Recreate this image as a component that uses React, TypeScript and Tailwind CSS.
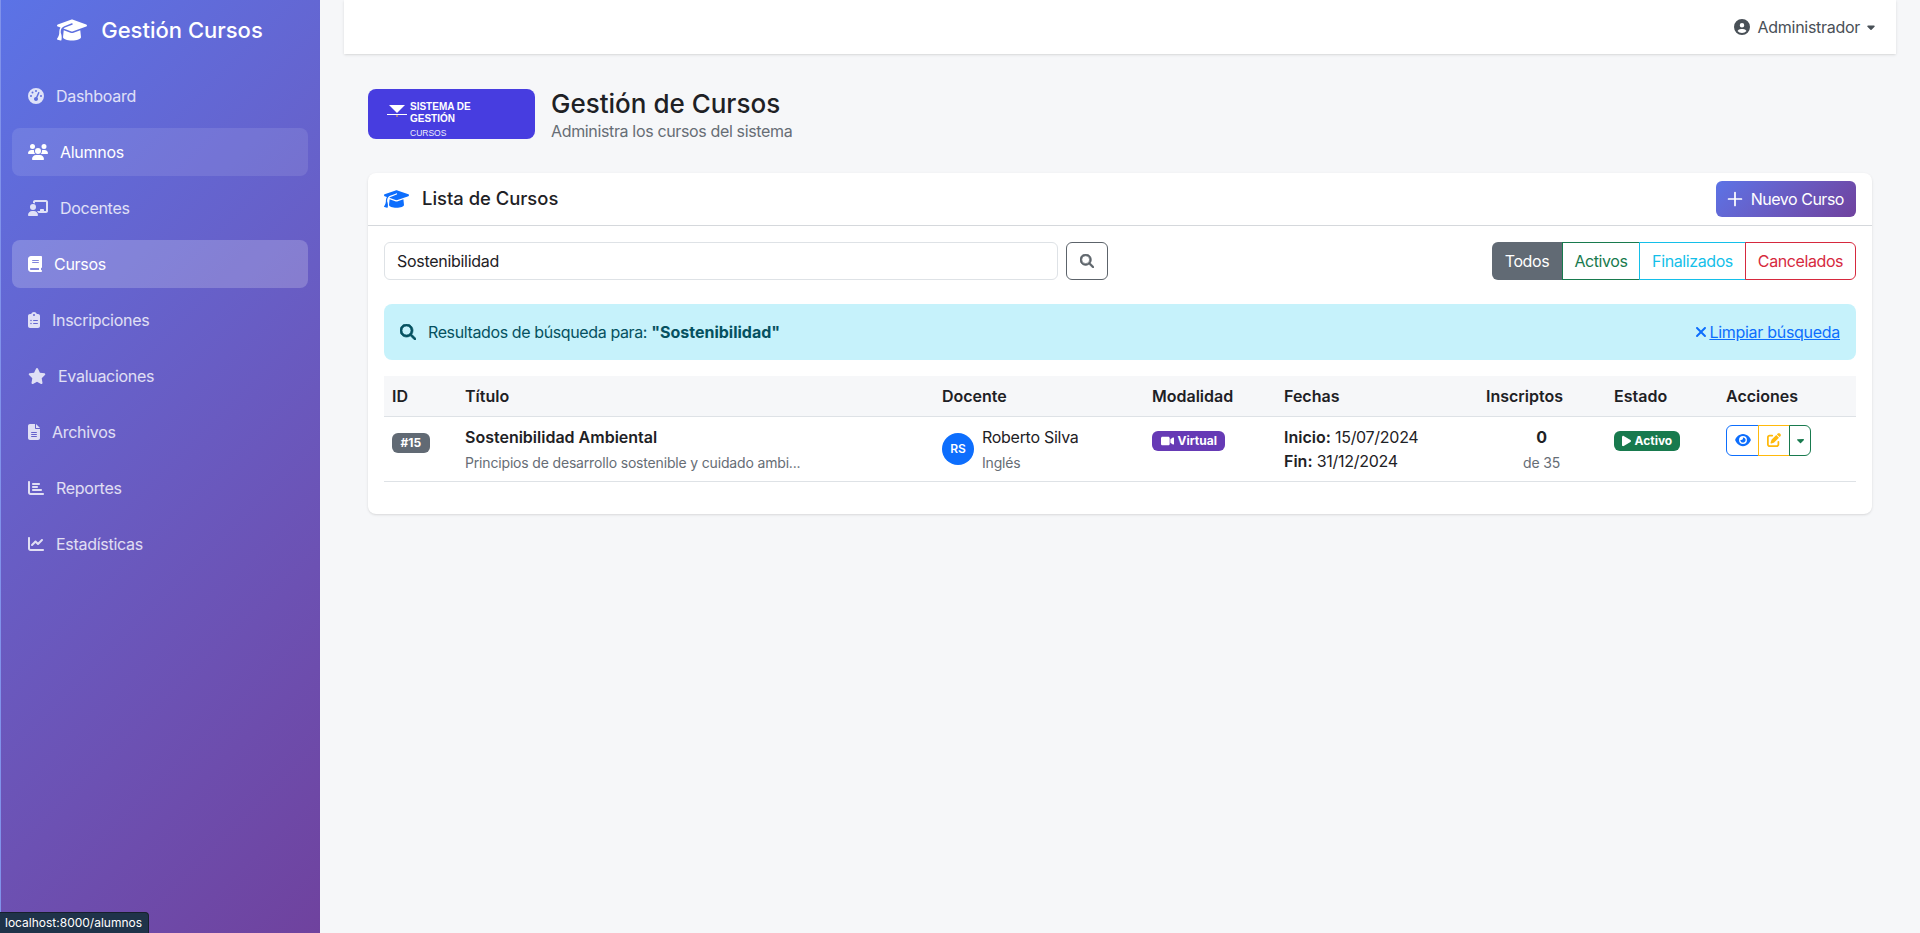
import type { ReactNode } from "react";
import {
  FaBook,
  FaCaretDown,
  FaChalkboardUser,
  FaChartBar,
  FaChartLine,
  FaCircleUser,
  FaClipboardList,
  FaEye,
  FaFileLines,
  FaGaugeHigh,
  FaGraduationCap,
  FaMagnifyingGlass,
  FaPenToSquare,
  FaPlay,
  FaStar,
  FaUsers,
  FaVideo,
  FaXmark,
} from "react-icons/fa6";
import { Plus } from "lucide-react";

type NavItem = { label: string; icon: ReactNode; state?: "hover" | "active" };

const NAV_ITEMS: NavItem[] = [
  { label: "Dashboard", icon: <FaGaugeHigh className="h-4 w-4" /> },
  { label: "Alumnos", icon: <FaUsers className="h-4 w-5" />, state: "hover" },
  { label: "Docentes", icon: <FaChalkboardUser className="h-4 w-5" /> },
  { label: "Cursos", icon: <FaBook className="h-4 w-3.5" />, state: "active" },
  { label: "Inscripciones", icon: <FaClipboardList className="h-4 w-3" /> },
  { label: "Evaluaciones", icon: <FaStar className="h-4 w-[18px]" /> },
  { label: "Archivos", icon: <FaFileLines className="h-4 w-3" /> },
  { label: "Reportes", icon: <FaChartBar className="h-4 w-4" /> },
  { label: "Estadísticas", icon: <FaChartLine className="h-4 w-4" /> },
];

function Sidebar() {
  return (
    <aside className="flex min-h-[933px] w-[320px] shrink-0 flex-col border-l border-[#8092ea] bg-linear-135 from-[#5b73e6] to-[#6f429e] pt-[10px] pr-[12px] pl-[11px]">
      <div className="flex h-[40px] items-center justify-center gap-[14px] text-white">
        <FaGraduationCap className="h-[24px] w-[30px]" />
        <span className="text-[22px] font-medium tracking-normal">Gestión Cursos</span>
      </div>
      <nav className="mt-[22px] flex flex-col gap-2">
        {NAV_ITEMS.map((item) => (
          <a
            key={item.label}
            className={`flex h-12 items-center gap-3 rounded-lg px-4 text-base ${
              item.state === "active"
                ? "bg-white/20 text-white"
                : item.state === "hover"
                  ? "bg-white/10 text-white"
                  : "text-white/80"
            }`}
          >
            {item.icon}
            <span>{item.label}</span>
          </a>
        ))}
      </nav>
    </aside>
  );
}

function Logo() {
  return (
    <div className="flex h-[50px] w-[167px] shrink-0 items-start rounded-lg bg-[#473de0] pt-[12px] pl-[19px] font-['Liberation_Sans',sans-serif] tracking-normal text-white">
      <svg viewBox="0 0 20 14" className="mt-[4px] h-[14px] w-[20px] shrink-0">
        <polygon points="2,0 18,0 10,8" fill="#fff" />
        <rect x="0" y="9" width="20" height="1" fill="#fff" />
        <rect x="9.5" y="10" width="1" height="2" fill="#f5b942" />
      </svg>
      <div className="ml-[3px] flex flex-col">
        <span className="text-[10px] leading-[12px] font-bold">
          SISTEMA DE
          <br />
          GESTIÓN
        </span>
        <span className="mt-[3px] text-[8.5px] leading-[10px] opacity-90">CURSOS</span>
      </div>
    </div>
  );
}

function Filters() {
  return (
    <div className="flex h-[38px] text-base tracking-[-0.025em]">
      <span className="flex w-[70px] items-center justify-center rounded-l-md bg-[#616a74] text-white">Todos</span>
      <span className="flex w-[78px] items-center justify-center border border-[#187a4e] text-[#187a4e]">Activos</span>
      <span className="-ml-px flex w-[107px] items-center justify-center border border-[#14bfe9] text-[#14bfe9]">Finalizados</span>
      <span className="-ml-px flex w-[111px] items-center justify-center rounded-r-md border border-[#d6293e] text-[#d6293e]">Cancelados</span>
    </div>
  );
}

function CourseTable() {
  return (
    <table className="mt-4 w-full table-fixed border-collapse text-base text-[#1e2125]">
      <colgroup>
        <col className="w-[73px]" />
        <col className="w-[477px]" />
        <col className="w-[210px]" />
        <col className="w-[132px]" />
        <col className="w-[202px]" />
        <col className="w-[128px]" />
        <col className="w-[112px]" />
        <col className="w-[138px]" />
      </colgroup>
      <thead>
        <tr className="h-[40px] border-b border-[#dee2e6] bg-[#f6f7f9] text-left tracking-normal">
          <th className="px-2 font-semibold">ID</th>
          <th className="px-2 font-semibold">Título</th>
          <th className="px-2 font-semibold">Docente</th>
          <th className="px-2 font-semibold">Modalidad</th>
          <th className="px-2 font-semibold">Fechas</th>
          <th className="px-2 font-semibold">Inscriptos</th>
          <th className="px-2 font-semibold">Estado</th>
          <th className="px-2 font-semibold">Acciones</th>
        </tr>
      </thead>
      <tbody>
        <tr className="h-[65px] border-b border-[#dee2e6] align-top">
          <td className="px-2 pt-[12px]">
            <span className="inline-flex h-[20px] items-center rounded-md bg-[#616a74] px-[8.5px] text-xs font-bold tracking-normal text-white">#15</span>
          </td>
          <td className="px-2 pt-[8px]">
            <div className="leading-[24px] font-semibold tracking-normal">Sostenibilidad Ambiental</div>
            <div className="mt-[3px] text-sm leading-[21px] tracking-[-0.012em] text-[#666d75]">Principios de desarrollo sostenible y cuidado ambi...</div>
          </td>
          <td className="px-2 pt-[8px]">
            <div className="flex items-start gap-2">
              <span className="mt-[8px] flex h-8 w-8 items-center justify-center rounded-full bg-[#0d6efd] text-xs font-semibold tracking-normal text-white">RS</span>
              <div>
                <div className="leading-[24px]">Roberto Silva</div>
                <div className="mt-[3px] text-sm leading-[21px] tracking-[-0.012em] text-[#666d75]">Inglés</div>
              </div>
            </div>
          </td>
          <td className="px-2 pt-[12px]">
            <span className="inline-flex h-[20px] items-center gap-1 rounded-md bg-[#663ab5] px-[8.5px] text-xs font-bold tracking-normal text-white">
              <FaVideo className="h-3 w-[13px]" />
              Virtual
            </span>
          </td>
          <td className="px-2 pt-[8px] leading-[24px]">
            <div>
              <span className="font-semibold tracking-normal">Inicio:</span> 15/07/2024
            </div>
            <div>
              <span className="font-semibold tracking-normal">Fin:</span> 31/12/2024
            </div>
          </td>
          <td className="px-2 pt-[8px] pr-[9px] text-center">
            <div className="leading-[24px] font-bold">0</div>
            <div className="mt-[3px] text-sm leading-[21px] tracking-[-0.012em] text-[#666d75]">de 35</div>
          </td>
          <td className="px-2 pt-[12px]">
            <span className="inline-flex h-[20px] items-center gap-1 rounded-md bg-[#187a4e] px-[7.5px] text-xs font-bold tracking-normal text-white">
              <FaPlay className="h-3 w-[9px]" />
              Activo
            </span>
          </td>
          <td className="px-2 pt-[8px]">
            <div className="flex h-[31px]">
              <span className="flex w-[33px] items-center justify-center rounded-l-md border border-[#0d6efd] text-[#0d6efd]">
                <FaEye className="h-[14px] w-4" />
              </span>
              <span className="-ml-px flex w-[32px] items-center justify-center border border-[#ffb90c] text-[#ffb90c]">
                <FaPenToSquare className="h-[14px] w-[14px]" />
              </span>
              <span className="-ml-px flex w-[22px] items-center justify-center rounded-r-md border border-[#187a4e] text-[#187a4e]">
                <FaCaretDown className="h-[11px] w-[9px]" />
              </span>
            </div>
          </td>
        </tr>
      </tbody>
    </table>
  );
}

export default function App() {
  return (
    <div className="relative flex min-h-[933px] overflow-hidden bg-[#f6f7f9] font-['Inter',sans-serif] tracking-[-0.018em] text-[#1e2125]">
      <Sidebar />
      <main className="flex-1 px-6">
        <header className="flex h-[54px] items-center justify-end bg-white px-[20px] text-[#495057] shadow-sm">
          <FaCircleUser className="h-4 w-4" />
          <span className="ml-2 text-base">Administrador</span>
          <FaCaretDown className="ml-[6px] h-[12px] w-[10px]" />
        </header>

        <div className="px-6 pt-[35px]">
          <section className="flex h-[50px] items-center gap-4">
            <Logo />
            <div>
              <h1 className="text-[26px] leading-[34px] font-medium tracking-normal">Gestión de Cursos</h1>
              <p className="text-base leading-[20px] tracking-[-0.022em] text-[#666d75]">Administra los cursos del sistema</p>
            </div>
          </section>

          <section className="mt-[34px] rounded-lg bg-white pb-[32px] shadow-sm">
            <div className="flex h-[53px] items-center justify-between border-b border-[#d5d8dc] px-4">
              <div className="flex items-center">
                <FaGraduationCap className="h-[20px] w-[25px] text-[#0d6efd]" />
                <h2 className="ml-[13px] text-[18.4px] font-medium tracking-normal">Lista de Cursos</h2>
              </div>
              <button className="flex h-[36px] items-center gap-[5px] rounded-md bg-linear-135 from-[#5b73e6] to-[#6f429e] pr-[12px] pl-[8px] text-base tracking-[-0.03em] text-white">
                <Plus className="h-[22px] w-[22px]" strokeWidth={1.9} />
                Nuevo Curso
              </button>
            </div>

            <div className="px-4 pt-4">
              <div className="flex items-center justify-between">
                <div className="flex items-center gap-2">
                  <div className="flex h-[38px] w-[674px] items-center rounded-md border border-[#dee2e6] bg-white px-3 text-base">Sostenibilidad</div>
                  <button className="flex h-[38px] w-[42px] items-center justify-center rounded-md border border-[#5c636a] text-[#5c636a]">
                    <FaMagnifyingGlass className="h-[14px] w-[14px] stroke-current stroke-[24px]" />
                  </button>
                </div>
                <Filters />
              </div>

              <div className="mt-6 flex h-[56px] items-center justify-between rounded-lg bg-[#c6f2fb] px-4 text-base text-[#055160]">
                <div className="flex items-center">
                  <FaMagnifyingGlass className="h-4 w-4 stroke-current stroke-[24px]" />
                  <span className="ml-[12px] tracking-[-0.024em]">
                    Resultados de búsqueda para: <strong className="font-bold tracking-normal">"Sostenibilidad"</strong>
                  </span>
                </div>
                <a className="flex items-center text-[#0d6efd]">
                  <FaXmark className="h-4 w-3" />
                  <span className="ml-[2px] underline">Limpiar búsqueda</span>
                </a>
              </div>

              <CourseTable />
            </div>
          </section>
        </div>
      </main>

      <div className="absolute bottom-0 left-0 flex h-[21px] w-[149px] items-center rounded-tr-sm border-t border-r border-[#16202c] bg-[#1f3349] pl-[5px] text-xs tracking-normal text-white">
        localhost:8000/alumnos
      </div>
    </div>
  );
}
